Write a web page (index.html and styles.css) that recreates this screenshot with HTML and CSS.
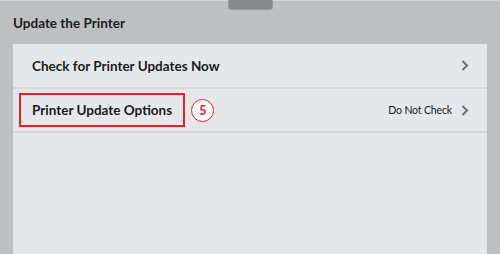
FILE: index.html
```html
<!DOCTYPE html>
<html>
<head>
<meta charset="utf-8">
<link rel="stylesheet" href="styles.css">
</head>
<body>
<div class="screen">
  <div class="tab"></div>
  <header class="header"><h1 class="title">Update the Printer</h1></header>
  <div class="panel">
    <div class="row">
      <span class="label">Check for Printer Updates Now</span>
      <span class="right">
        <svg class="chev" width="8" height="11" viewBox="0 0 8 11"><path d="M1.5 1 L6 5.5 L1.5 10" fill="none" stroke="#6f7072" stroke-width="2"/></svg>
      </span>
    </div>
    <div class="row">
      <span class="label boxed">Printer Update Options</span>
      <span class="badge">5</span>
      <span class="right">
        <span class="value">Do Not Check</span>
        <svg class="chev" width="8" height="11" viewBox="0 0 8 11"><path d="M1.5 1 L6 5.5 L1.5 10" fill="none" stroke="#6f7072" stroke-width="2"/></svg>
      </span>
    </div>
  </div>
</div>
</body>
</html>
```

FILE: styles.css
```css
html, body {
  margin: 0;
  padding: 0;
}
body {
  width: 500px;
  height: 254px;
  overflow: hidden;
  background: #bebfc1;
  font-family: Lato, "Liberation Sans", sans-serif;
}
.screen {
  position: relative;
  height: 254px;
  display: flex;
  flex-direction: column;
  border-top: 1px solid #d2d3d4;
  box-sizing: border-box;
}
.tab {
  position: absolute;
  left: 229px;
  top: -1px;
  width: 43px;
  height: 9px;
  background: #87888a;
  border-radius: 0 0 2px 2px;
  box-shadow: 0 0 0 1px #9a9b9d;
}
.header {
  height: 43px;
  display: flex;
  align-items: center;
  padding: 0 13px;
  box-sizing: border-box;
}
.title {
  margin: 0;
  font-size: 13.5px;
  font-weight: 700;
  color: #1b1b1c;
  padding-top: 1px;
}
.panel {
  flex: 1;
  margin: 0 13px;
  background: #e6e7e8;
}
.row {
  height: 44px;
  display: flex;
  align-items: center;
  padding: 0 18px 0 19px;
  border-bottom: 2px solid #d6d7d9;
  box-sizing: border-box;
  color: #1b1b1c;
}
.row:first-child {
  height: 45px;
}
.label {
  font-size: 13.5px;
  font-weight: 700;
  white-space: nowrap;
}
.boxed {
  height: 34px;
  display: flex;
  align-items: center;
  margin-left: -13px;
  padding: 0 11px;
  box-sizing: border-box;
  border: 2px solid #e3222b;
}
.badge {
  width: 23px;
  height: 23px;
  margin-left: 6px;
  border: 1.5px solid #e3222b;
  border-radius: 50%;
  background: #ffffff;
  color: #e3222b;
  font-weight: 700;
  font-size: 13px;
  display: flex;
  align-items: center;
  justify-content: center;
  box-sizing: border-box;
}
.right {
  margin-left: auto;
  display: flex;
  align-items: center;
  gap: 9px;
}
.value {
  font-size: 10.5px;
  letter-spacing: -0.15px;
  color: #1b1b1c;
  white-space: nowrap;
}
.chev {
  display: block;
}
```
